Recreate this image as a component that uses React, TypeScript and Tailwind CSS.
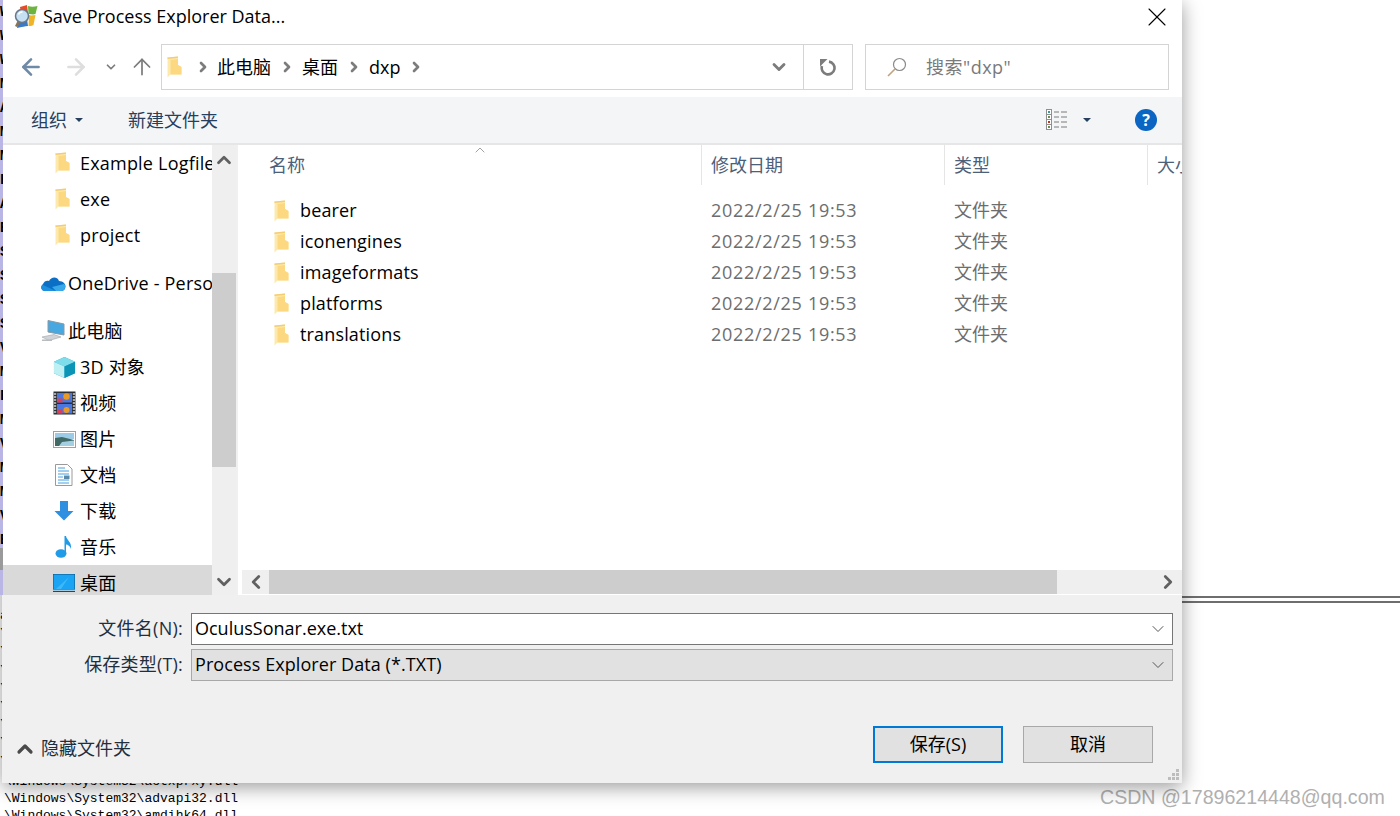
import type { ReactNode } from 'react';
import { ChevronDown, ChevronLeft, ChevronRight, ChevronUp, ArrowLeft, ArrowRight, ArrowUp, X } from 'lucide-react';

const FONT = "font-['Open_Sans','Noto_Sans_CJK_SC',sans-serif]";

function FolderIcon() {
  return (
    <svg width="15" height="22" viewBox="0 0 15 22" className="shrink-0">
      <path d="M0.5 1.5 L11 0.5 V9 L14.5 11 V18.5 H3.5 L0.5 21.5 Z" fill="#fde9ae" />
      <path d="M3.5 4 L11 3 V9 L14.5 11 V18.5 H3.5 Z" fill="#fcd981" />
      <path d="M0.5 1.5 L11 0.5 V2 L0.5 3 Z" fill="#f3cd72" />
    </svg>
  );
}

function Cube() {
  return (
    <svg width="23" height="23" viewBox="0 0 24 24">
      <path d="M12 1 L23 6 V18 L12 23 L1 18 V6 Z" fill="#1aa5c4" />
      <path d="M12 1 L23 6 L12 11 L1 6 Z" fill="#7fdcea" />
      <path d="M1 6 L12 11 V23 L1 18 Z" fill="#bdeff3" />
      <path d="M12 11 L23 6 V18 L12 23 Z" fill="#0c94b6" />
    </svg>
  );
}

function Film() {
  return (
    <svg width="23" height="24" viewBox="0 0 23 24">
      <rect x="0.5" y="0.5" width="22" height="23" fill="#2b3036" />
      <path d="M2 2 V22" stroke="#a8a8a8" strokeWidth="2.4" strokeDasharray="2 1" />
      <path d="M21 2 V22" stroke="#a8a8a8" strokeWidth="2.4" strokeDasharray="2 1" />
      <rect x="4" y="2" width="15" height="9.5" fill="#4a78e0" />
      <rect x="4" y="13" width="15" height="9.5" fill="#4a78e0" />
      <circle cx="13.5" cy="5.5" r="3.2" fill="#e89a28" />
      <circle cx="13.5" cy="19" r="3" fill="#e89a28" />
      <rect x="4.5" y="7.5" width="5" height="4" fill="#d8405a" />
      <rect x="4.5" y="18.5" width="5" height="4" fill="#d8405a" />
    </svg>
  );
}

function Picture() {
  return (
    <svg width="23" height="17" viewBox="0 0 23 17">
      <rect x="0.5" y="0.5" width="22" height="16" fill="#fff" stroke="#a0a0a0" />
      <rect x="2" y="2" width="19" height="6" fill="#9ccbe8" />
      <path d="M2 7 L9 6 L21 9 V15 H2 Z" fill="#3f6a66" />
      <path d="M9 11 L21 9.5 V15 H6 Z" fill="#a4cfe2" />
    </svg>
  );
}

function DocIcon() {
  return (
    <svg width="18" height="22" viewBox="0 0 18 22">
      <path d="M0.5 0.5 H12.5 L17 5 V21.5 H0.5 Z" fill="#fff" stroke="#9a9a9a" />
      <path d="M3 4 H10 M3 7 H14 M3 10 H14 M3 13 H8 M3 16 H14 M3 19 H14" stroke="#46a0dc" strokeWidth="1" />
      <rect x="9" y="11.5" width="5.5" height="3.5" fill="#5a8aa8" />
    </svg>
  );
}

function Download() {
  return (
    <svg width="20" height="20" viewBox="0 0 20 20">
      <path d="M6 0 H14 V10 H19.5 L10 19.5 L0.5 10 H6 Z" fill="#2f8fe0" />
    </svg>
  );
}

function Music() {
  return (
    <svg width="18" height="22" viewBox="0 0 18 22">
      <ellipse cx="6" cy="17.5" rx="5.5" ry="4.2" fill="#1f9be8" />
      <path d="M9.5 0 H11 C11.5 4 17 6 16 13 C15 10 13 8.5 11 8.5 V18 H9.5 Z" fill="#1f9be8" />
    </svg>
  );
}

function Desktop() {
  return (
    <svg width="22" height="18" viewBox="0 0 22 18">
      <rect width="22" height="18" fill="#0b4f80" />
      <rect x="0.5" y="0.5" width="21" height="14.5" fill="#1ba4f4" />
      <path d="M3 15 L16 3 L8 15 Z" fill="#3db8f8" />
      <rect y="15.5" width="22" height="1.5" fill="#a8c8dc" />
    </svg>
  );
}

function OneDrive() {
  return (
    <svg width="26" height="18" viewBox="0 0 26 18">
      <path d="M5 17 C1 17 0 12 3 10 C4 7 7 6 9 7 C11 3 17 2 19 7 C23 7 26 10 25.5 13 C25 16 23 17 21 17 Z" fill="#0b6fc6" />
      <path d="M5 17 C1 17 0 12 3 11 L16 17 Z" fill="#1c8fdf" />
      <path d="M16 17 H21 C25 17 26.5 12 24 10 L12 13 Z" fill="#38a8e8" />
    </svg>
  );
}

function PC() {
  return (
    <svg width="24" height="22" viewBox="0 0 24 22">
      <path d="M7 0.5 L23 4 V15 L7 12 Z" fill="#4aa8e0" stroke="#8a98a4" />
      <path d="M1 17 L13 14.5 L20 17 L8 20.5 Z" fill="#d0d4d8" stroke="#a0a4a8" strokeWidth="0.6" />
      <rect x="1" y="19.5" width="10" height="1.5" fill="#b8bcc0" />
    </svg>
  );
}

function AppLogo() {
  return (
    <svg width="24" height="23" viewBox="0 0 24 23">
      <path d="M6 2 L13 0 L14 8 L7 9 Z" fill="#e84b28" />
      <path d="M14 1 C17 2 20 2 23.5 1 L21.5 9 C19 10 17 9 14.5 9 Z" fill="#6db33f" />
      <path d="M4 16 L13 14 L14 21 C11 21 8 22 3 23 Z" fill="#3a78c8" />
      <path d="M15 10 C17 11 19 10 21.5 10 L19.5 20 C18 21 16 21 14.5 21 Z" fill="#f0b428" />
      <path d="M1 21 L4 15 L7 17 L3 22 Z" fill="#8a7458" />
      <circle cx="8" cy="11" r="6.5" fill="#c4e0f2" stroke="#66788a" strokeWidth="1.5" />
      <path d="M4.5 9.5 A4 4 0 0 1 8.5 7" stroke="#fff" strokeWidth="1.5" fill="none" />
    </svg>
  );
}

function ViewsIcon() {
  const ys = [1, 6, 11, 16];
  return (
    <svg width="22" height="22" viewBox="0 0 22 22">
      {ys.map((y, i) => (
        <g key={y}>
          <rect x="0.5" y={y - 0.5} width="5" height="5" fill="#fff" stroke="#8f8f8f" />
          <rect x="2" y={y + 1} width="2" height="2" fill={i === 2 ? '#c83020' : i === 0 ? '#3a9a9a' : '#6a8a50'} />
          <path d={`M8 ${y + 2} H13 M15 ${y + 2} H21`} stroke="#7a7a7a" />
        </g>
      ))}
    </svg>
  );
}

function Caret({ className }: { className: string }) {
  return <div className={`w-0 h-0 border-x-[4px] border-x-transparent border-t-[4px] ${className}`} />;
}

function NavItem({ icon, label, indent, cols = 'w-[29px]', selected }: { icon: ReactNode; label: string; indent: string; cols?: string; selected?: boolean }) {
  return (
    <div className={`h-[36px] flex items-center shrink-0 overflow-hidden whitespace-nowrap ${indent} ${selected ? 'bg-[#d9d9d9]' : ''}`}>
      <div className={`${cols} flex justify-center shrink-0`}>{icon}</div>
      <span className="text-[18px] tracking-[0.2px] text-black ml-[1px]">{label}</span>
    </div>
  );
}

function NavFolder() {
  return (
    <div className="mr-[4px]"><FolderIcon /></div>
  );
}

const files = ['bearer', 'iconengines', 'imageformats', 'platforms', 'translations'];

// letters of the list in the window behind, only their left edge shows
const behindTop = ['W', 'W', 'W', 'M', 'A', 'M', 'M', 'F', 'A', 'B', 'S', 'S', 'S', 'S', 'V', 'M', 'F', 'M', 'V', 'M', 'M', 'V', 'B'];
const behindBottom = ['a', '\\', '\\', '\\', '\\', '\\', '\\', '\\', '\\'];

function FileRow({ name }: { name: string }) {
  return (
    <div className="h-[31px] flex items-center">
      <div className="w-[58px] pl-[32px] shrink-0"><FolderIcon /></div>
      <span className="w-[411px] text-[18px] tracking-[0.15px] text-black">{name}</span>
      <span className="w-[243px] text-[18px] tracking-[0.7px] text-[#6d6d6d]">2022/2/25 19:53</span>
      <span className="text-[18px] text-[#6d6d6d]">文件夹</span>
    </div>
  );
}

function Header({ label, className }: { label: string; className: string }) {
  return (
    <div className={`h-[40px] flex items-center text-[18px] text-[#4c607a] whitespace-nowrap overflow-hidden ${className}`}>{label}</div>
  );
}

export default function App() {
  return (
    <div className={`relative w-[1400px] h-[816px] overflow-hidden bg-white ${FONT}`}>
      {/* what is left visible of the window behind the dialog */}
      <div className="absolute left-[1182px] right-0 top-[596px] h-[7px] border-y-2 border-[#6e6e6e]" />
      <div className="absolute left-[4px] top-[773px] font-['Liberation_Mono',monospace] text-[13px] leading-[17px] text-black whitespace-pre">
        <div>\Windows\System32\actxprxy.dll</div>
        <div>\Windows\System32\advapi32.dll</div>
        <div>\Windows\System32\amdihk64.dll</div>
      </div>
      <div className="absolute left-[1100px] top-[785px] font-['Liberation_Sans',sans-serif] text-[19.6px] leading-[24px] text-[#b0b0b0] whitespace-nowrap">CSDN @17896214448@qq.com</div>

      <div className="absolute left-[2px] top-0 w-[1180px] h-[783px] bg-white flex flex-col shadow-[0_4px_18px_rgba(0,0,0,0.4)]">
        <div className="h-[33px] flex items-center shrink-0 pl-[12px]">
          <AppLogo />
          <span className="ml-[5px] text-[18px] text-black">Save Process Explorer Data...</span>
          <X className="ml-auto mr-[9px] w-[32px] h-[32px] text-black" strokeWidth={0.8} />
        </div>

        <div className="h-[64px] flex items-start pt-[11px] shrink-0">
          <div className="w-[159px] h-[46px] flex items-center shrink-0">
            <ArrowLeft className="ml-[16px] w-[26px] h-[26px] text-[#6f8aa6]" strokeWidth={2.4} />
            <ArrowRight className="ml-[19px] w-[26px] h-[26px] text-[#dedede]" strokeWidth={2.4} />
            <ChevronDown className="ml-[15px] w-[14px] h-[14px] text-[#7c7c7c]" strokeWidth={3} />
            <ArrowUp className="ml-[11px] w-[26px] h-[26px] text-[#7c7c7c]" strokeWidth={1.6} />
          </div>
          <div className="w-[692px] h-[46px] border border-[#d4d4d4] flex items-center shrink-0">
            <div className="ml-[5px]"><FolderIcon /></div>
            <ChevronRight className="ml-[13px] w-[16px] h-[16px] text-[#7c7c7c]" strokeWidth={4} />
            <span className="ml-[6px] text-[18px] text-black">此电脑</span>
            <ChevronRight className="ml-[8px] w-[16px] h-[16px] text-[#7c7c7c]" strokeWidth={4} />
            <span className="ml-[7px] text-[18px] text-black">桌面</span>
            <ChevronRight className="ml-[8px] w-[16px] h-[16px] text-[#7c7c7c]" strokeWidth={4} />
            <span className="ml-[7px] text-[18px] text-black">dxp</span>
            <ChevronRight className="ml-[8px] w-[16px] h-[16px] text-[#7c7c7c]" strokeWidth={4} />
            <ChevronDown className="ml-auto mr-[14px] w-[20px] h-[20px] text-[#7c7c7c]" strokeWidth={3.4} />
            <div className="w-[49px] h-full border-l border-[#d4d4d4] flex items-center justify-center">
              <svg width="18" height="18" viewBox="0 0 18 18">
                <path d="M10 3.6 A6.4 6.4 0 1 1 3 8" fill="none" stroke="#7c7c7c" strokeWidth="2.6" />
                <path d="M1 1 H8.5 L1 8.5 Z" fill="#7c7c7c" />
              </svg>
            </div>
          </div>
          <div className="ml-[12px] w-[304px] h-[46px] border border-[#d4d4d4] flex items-center shrink-0">
            <svg width="20" height="20" viewBox="0 0 20 20" className="ml-[21px]">
              <circle cx="12.5" cy="7.5" r="6" fill="none" stroke="#8a8a8a" strokeWidth="1.2" />
              <path d="M8 12 L1 19" stroke="#c2a27c" strokeWidth="1.6" />
            </svg>
            <span className="ml-[19px] text-[18px] tracking-[0.5px] text-[#7a7a7a]">搜索"dxp"</span>
          </div>
        </div>

        <div className="h-[48px] bg-[#f4f5f7] border-b-2 border-[#e6e6e6] flex items-center shrink-0">
          <span className="ml-[29px] text-[18px] text-[#26405e]">组织</span>
          <Caret className="ml-[8px] border-t-[#26405e]" />
          <span className="ml-[45px] text-[18px] text-[#26405e]">新建文件夹</span>
          <div className="ml-auto"><ViewsIcon /></div>
          <Caret className="ml-[15px] mr-[44px] border-t-[#26405e]" />
          <div className="mr-[25px] w-[22px] h-[22px] rounded-full bg-[#0a66c2] flex items-center justify-center text-white text-[16px] font-bold">?</div>
        </div>

        <div className="h-[450px] flex shrink-0">
          <div className="w-[210px] flex flex-col overflow-hidden shrink-0">
            <NavItem indent="pl-[47px]" icon={<NavFolder />} label="Example Logfile" cols="w-[30px]" />
            <NavItem indent="pl-[47px]" icon={<NavFolder />} label="exe" cols="w-[30px]" />
            <NavItem indent="pl-[47px]" icon={<NavFolder />} label="project" cols="w-[30px]" />
            <div className="h-[12px] shrink-0" />
            <NavItem indent="pl-[36px]" icon={<OneDrive />} label="OneDrive - Personal" />
            <div className="h-[12px] shrink-0" />
            <NavItem indent="pl-[36px]" icon={<PC />} label="此电脑" />
            <NavItem indent="pl-[47px]" icon={<Cube />} label="3D 对象" cols="w-[30px]" />
            <NavItem indent="pl-[47px]" icon={<Film />} label="视频" cols="w-[30px]" />
            <NavItem indent="pl-[47px]" icon={<Picture />} label="图片" cols="w-[30px]" />
            <NavItem indent="pl-[47px]" icon={<DocIcon />} label="文档" cols="w-[30px]" />
            <NavItem indent="pl-[47px]" icon={<Download />} label="下载" cols="w-[30px]" />
            <NavItem indent="pl-[47px]" icon={<Music />} label="音乐" cols="w-[30px]" />
            <NavItem indent="pl-[47px]" icon={<Desktop />} label="桌面" cols="w-[30px]" selected />
          </div>
          <div className="w-[24px] bg-[#efefef] flex flex-col shrink-0">
            <div className="h-[30px] flex items-center justify-center"><ChevronUp className="w-[22px] h-[22px] text-[#606060]" strokeWidth={3} /></div>
            <div className="h-[194px] mt-[98px] bg-[#cdcdcd]" />
            <div className="mt-auto h-[26px] flex items-center justify-center"><ChevronDown className="w-[22px] h-[22px] text-[#606060]" strokeWidth={3} /></div>
          </div>
          <div className="w-[6px] bg-white border-l-2 border-[#f0f0f0] shrink-0" />
          <div className="flex-1 flex flex-col min-w-0 relative">
            <ChevronUp className="absolute left-[230px] top-[-3px] w-[16px] h-[16px] text-[#888888]" strokeWidth={1.2} />
            <div className="flex h-[40px] shrink-0">
              <Header label="名称" className="w-[460px] pl-[27px] border-r border-[#e5e5e5]" />
              <Header label="修改日期" className="w-[243px] pl-[9px] border-r border-[#e5e5e5]" />
              <Header label="类型" className="w-[203px] pl-[9px] border-r border-[#e5e5e5]" />
              <Header label="大小" className="flex-1 pl-[9px]" />
            </div>
            <div className="pt-[10px] flex-1">
              {files.map((f) => <FileRow key={f} name={f} />)}
            </div>
            <div className="h-[24px] bg-[#efefef] flex items-center shrink-0 mb-[1px]">
              <div className="w-[27px] flex justify-center"><ChevronLeft className="w-[22px] h-[22px] text-[#606060]" strokeWidth={3} /></div>
              <div className="w-[788px] h-full bg-[#cdcdcd]" />
              <ChevronRight className="ml-auto mr-[3px] w-[22px] h-[22px] text-[#606060]" strokeWidth={3} />
            </div>
          </div>
        </div>

        <div className="flex-1 bg-[#f0f0f0] relative flex flex-col">
          <div className="flex items-center mt-[18px] h-[32px]">
            <span className="w-[181px] text-right text-[18px] tracking-[0.25px] text-[#1f2f40] pb-[1px]">文件名(N):</span>
            <div className="ml-[8px] w-[982px] h-[32px] bg-white border border-[#767676] flex items-center">
              <span className="ml-[3px] pb-[1px] text-[18px] text-black">OculusSonar.exe.txt</span>
              <ChevronDown className="ml-auto mr-[4px] w-[20px] h-[20px] text-[#555555]" strokeWidth={1.2} />
            </div>
          </div>
          <div className="flex items-center mt-[4px] h-[32px]">
            <span className="w-[181px] text-right text-[18px] tracking-[0.2px] text-[#1f2f40] pb-[1px]">保存类型(T):</span>
            <div className="ml-[8px] w-[982px] h-[32px] bg-[#e1e1e1] border border-[#a8a8a8] flex items-center">
              <span className="ml-[3px] pb-[1px] text-[18px] tracking-[0.07px] text-black">Process Explorer Data (*.TXT)</span>
              <ChevronDown className="ml-auto mr-[4px] w-[20px] h-[20px] text-[#555555]" strokeWidth={1.2} />
            </div>
          </div>
          <div className="mt-auto mb-[20px] flex items-center h-[37px]">
            <div className="flex items-center mt-[8px]">
              <ChevronUp className="ml-[11px] w-[24px] h-[24px] text-[#4a4a4a]" strokeWidth={3.2} />
              <span className="ml-[4px] text-[18px] text-[#1f2f40]">隐藏文件夹</span>
            </div>
            <button className="ml-auto w-[130px] h-[37px] bg-[#e1e1e1] border-2 border-[#0078d7] text-[18px] text-black">保存(S)</button>
            <button className="ml-[20px] mr-[29px] w-[130px] h-[37px] bg-[#e1e1e1] border border-[#a8a8a8] text-[18px] text-black">取消</button>
          </div>
          <svg width="12" height="12" viewBox="0 0 12 12" className="absolute right-[2px] bottom-[2px]">
            <path d="M8 0h3v3H8zM4 4h3v3H4zM8 4h3v3H8zM0 8h3v3H0zM4 8h3v3H4zM8 8h3v3H8z" fill="#bdbdbd" />
          </svg>
        </div>
      </div>

      {/* slivers of the window behind that stick out left of the dialog */}
      <div className="absolute left-0 top-0 w-[3px] h-[595px] bg-[#b9b5e4] overflow-hidden font-['Liberation_Mono',monospace] text-[14px] font-bold text-black">
        {behindTop.map((c, i) => (
          <div key={i} className="h-[24px] leading-[24px]">{c}</div>
        ))}
        <div className="h-[22px] -mt-[4px] bg-[#9a9a9a]" />
      </div>
      <div className="absolute left-0 top-[607px] w-[2px] h-[168px] overflow-hidden font-['Liberation_Mono',monospace] text-[13px] text-black">
        {behindBottom.map((c, i) => (
          <div key={i} className="h-[18.2px] leading-[18px]">{c}</div>
        ))}
      </div>
    </div>
  );
}
